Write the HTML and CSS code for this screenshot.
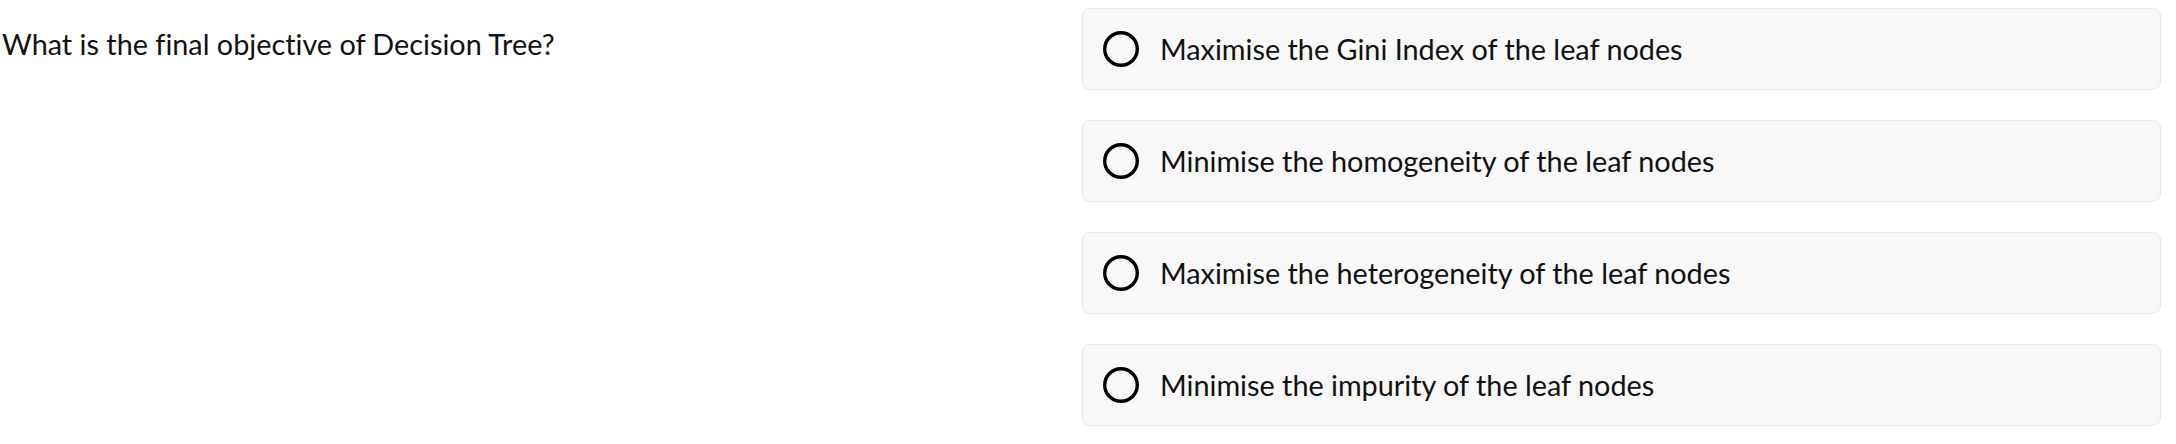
FILE: index.html
```html
<!DOCTYPE html>
<html lang="en">
<head>
<meta charset="utf-8">
<title>Quiz</title>
<link rel="stylesheet" href="styles.css">
</head>
<body>
<main class="quiz">
  <div class="question">What is the final objective of Decision Tree?</div>
  <div class="options">
    <label class="option">
      <svg class="radio" viewBox="0 0 36 36" width="36" height="36"><circle cx="18" cy="18" r="16.3" fill="none" stroke="#000" stroke-width="3.4"/></svg>
      <span class="label">Maximise the Gini Index of the leaf nodes</span>
    </label>
    <label class="option">
      <svg class="radio" viewBox="0 0 36 36" width="36" height="36"><circle cx="18" cy="18" r="16.3" fill="none" stroke="#000" stroke-width="3.4"/></svg>
      <span class="label">Minimise the homogeneity of the leaf nodes</span>
    </label>
    <label class="option">
      <svg class="radio" viewBox="0 0 36 36" width="36" height="36"><circle cx="18" cy="18" r="16.3" fill="none" stroke="#000" stroke-width="3.4"/></svg>
      <span class="label">Maximise the heterogeneity of the leaf nodes</span>
    </label>
    <label class="option">
      <svg class="radio" viewBox="0 0 36 36" width="36" height="36"><circle cx="18" cy="18" r="16.3" fill="none" stroke="#000" stroke-width="3.4"/></svg>
      <span class="label">Minimise the impurity of the leaf nodes</span>
    </label>
  </div>
</main>
</body>
</html>
```
FILE: styles.css
```css
html, body {
  margin: 0;
  padding: 0;
  background: #ffffff;
}
body {
  font-family: Lato, "Open Sans", "Liberation Sans", sans-serif;
  color: #111111;
  font-variant-ligatures: none;
  font-feature-settings: "liga" 0, "clig" 0;
}
.quiz {
  display: grid;
  grid-template-columns: 1082px 1079px;
  padding-top: 8px;
}
.question {
  font-size: 28.8px;
  line-height: 1.2;
  padding-top: 19px;
  padding-left: 2px;
}
.options {
  display: flex;
  flex-direction: column;
  gap: 30px;
}
.option {
  display: flex;
  align-items: center;
  gap: 21px;
  height: 82px;
  box-sizing: border-box;
  padding: 0 20px;
  background: #f8f8f8;
  border: 1.5px solid #e7e7eb;
  border-radius: 8px;
}
.radio {
  flex: none;
  display: block;
}
.label {
  font-size: 28.8px;
  line-height: 36px;
}
```
